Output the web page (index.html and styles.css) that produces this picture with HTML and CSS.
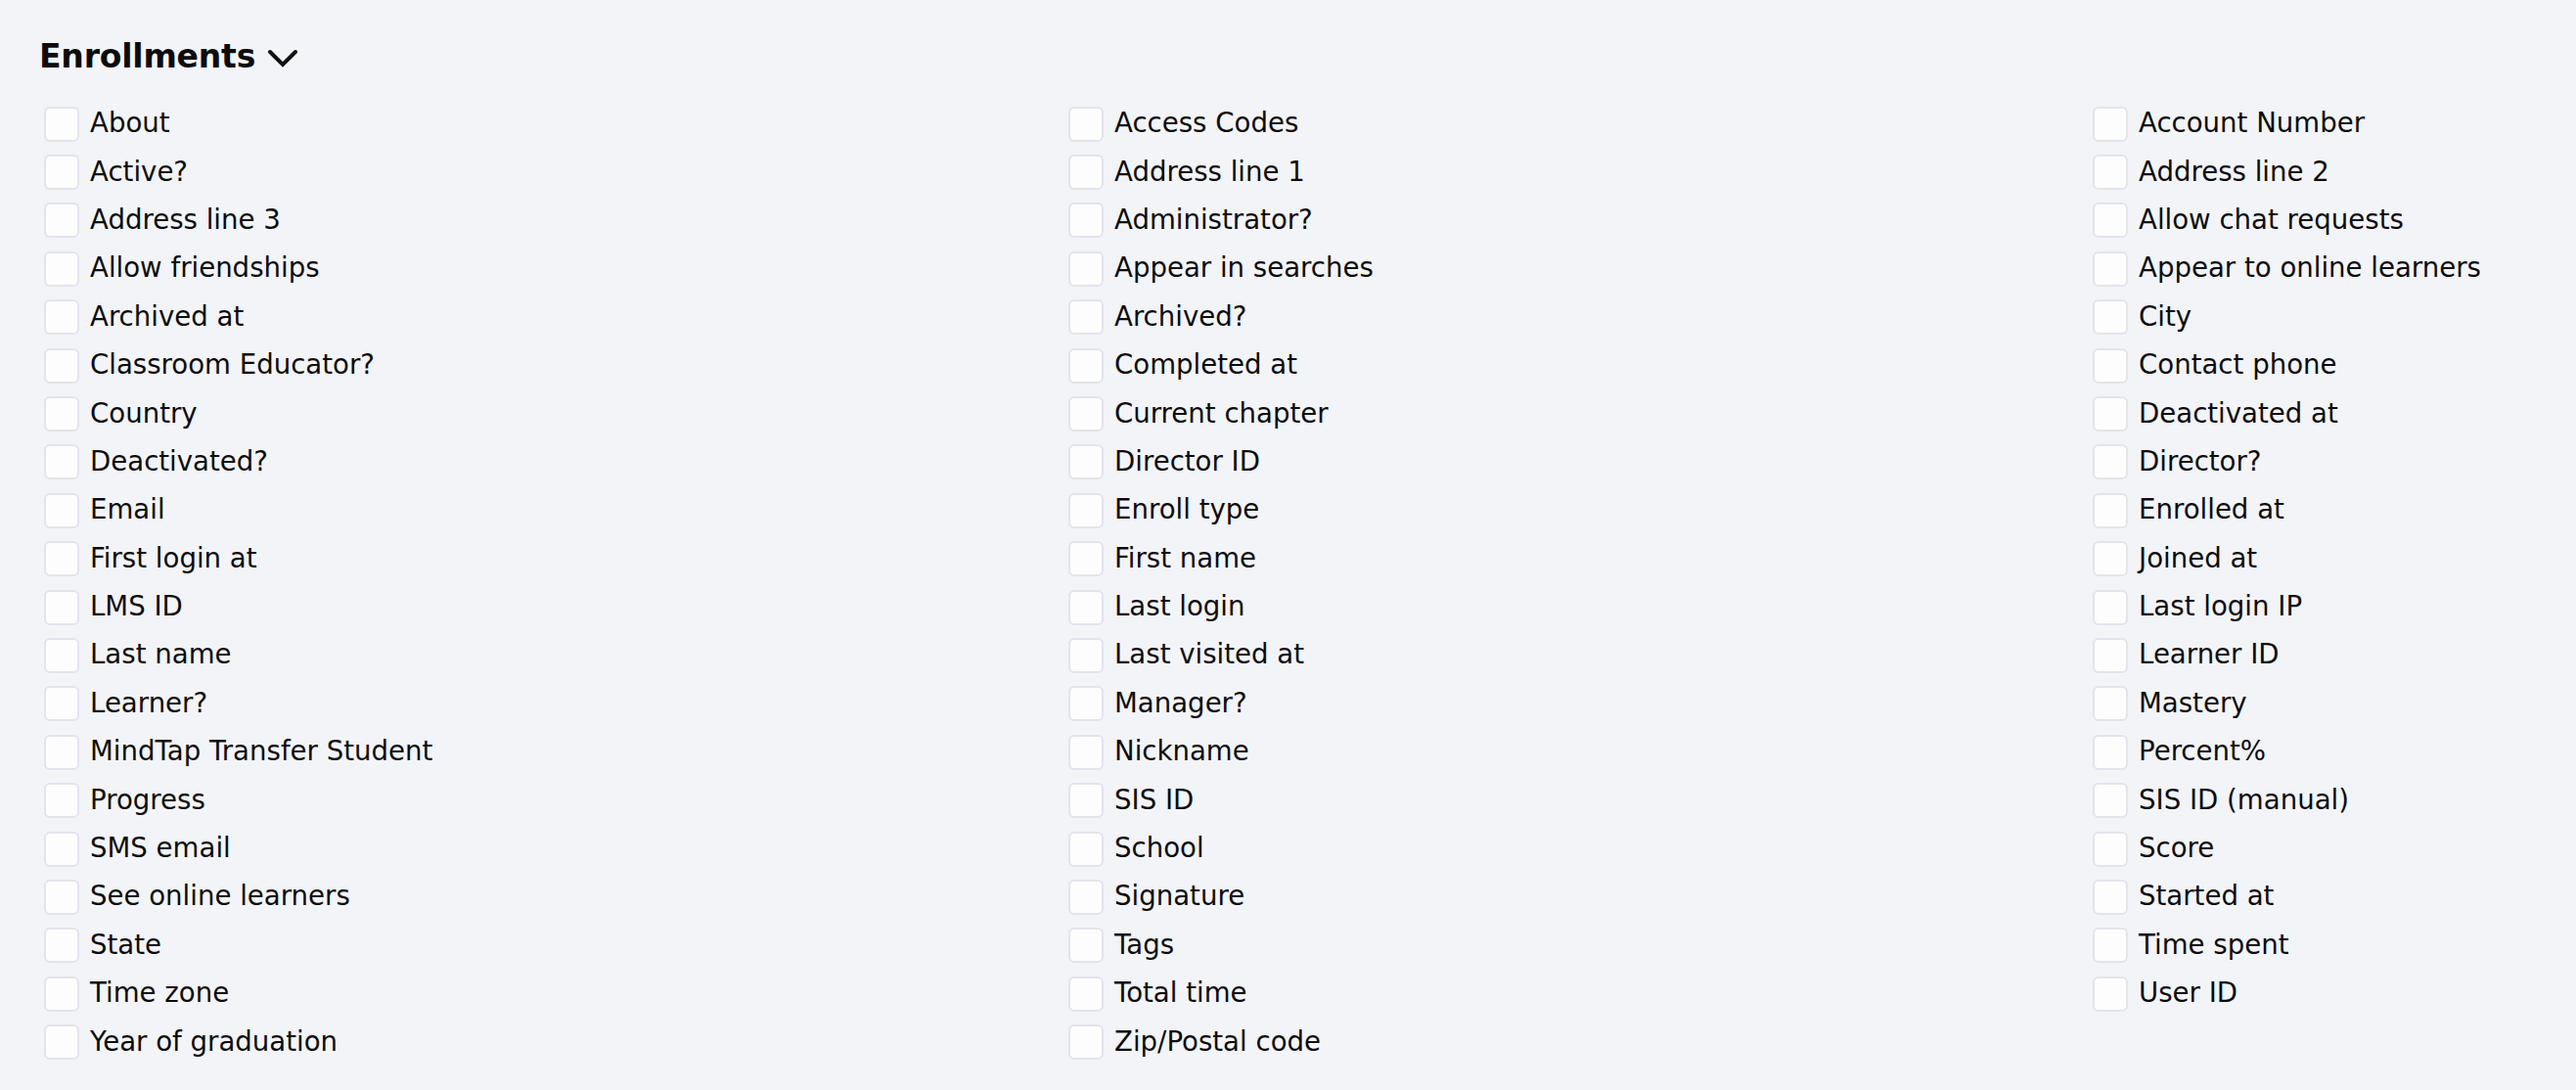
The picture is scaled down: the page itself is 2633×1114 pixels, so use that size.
FILE: index.html
```html
<!DOCTYPE html>
<html lang="en">
<head>
<meta charset="utf-8">
<title>Enrollments</title>
<link rel="stylesheet" href="styles.css">
</head>
<body>
<section class="panel">
  <h2 class="panel-title">Enrollments
    <svg class="chev" viewBox="0 0 32 20" width="32" height="20" aria-hidden="true"><path d="M3 3 L16 16 L29 3" fill="none" stroke="#111" stroke-width="4" stroke-linecap="round" stroke-linejoin="miter"/></svg>
  </h2>
  <div class="fields">
    <label class="field"><span class="box"></span><span class="lbl">About</span></label>
    <label class="field"><span class="box"></span><span class="lbl">Access Codes</span></label>
    <label class="field"><span class="box"></span><span class="lbl">Account Number</span></label>
    <label class="field"><span class="box"></span><span class="lbl">Active?</span></label>
    <label class="field"><span class="box"></span><span class="lbl">Address line 1</span></label>
    <label class="field"><span class="box"></span><span class="lbl">Address line 2</span></label>
    <label class="field"><span class="box"></span><span class="lbl">Address line 3</span></label>
    <label class="field"><span class="box"></span><span class="lbl">Administrator?</span></label>
    <label class="field"><span class="box"></span><span class="lbl">Allow chat requests</span></label>
    <label class="field"><span class="box"></span><span class="lbl">Allow friendships</span></label>
    <label class="field"><span class="box"></span><span class="lbl">Appear in searches</span></label>
    <label class="field"><span class="box"></span><span class="lbl">Appear to online learners</span></label>
    <label class="field"><span class="box"></span><span class="lbl">Archived at</span></label>
    <label class="field"><span class="box"></span><span class="lbl">Archived?</span></label>
    <label class="field"><span class="box"></span><span class="lbl">City</span></label>
    <label class="field"><span class="box"></span><span class="lbl">Classroom Educator?</span></label>
    <label class="field"><span class="box"></span><span class="lbl">Completed at</span></label>
    <label class="field"><span class="box"></span><span class="lbl">Contact phone</span></label>
    <label class="field"><span class="box"></span><span class="lbl">Country</span></label>
    <label class="field"><span class="box"></span><span class="lbl">Current chapter</span></label>
    <label class="field"><span class="box"></span><span class="lbl">Deactivated at</span></label>
    <label class="field"><span class="box"></span><span class="lbl">Deactivated?</span></label>
    <label class="field"><span class="box"></span><span class="lbl">Director ID</span></label>
    <label class="field"><span class="box"></span><span class="lbl">Director?</span></label>
    <label class="field"><span class="box"></span><span class="lbl">Email</span></label>
    <label class="field"><span class="box"></span><span class="lbl">Enroll type</span></label>
    <label class="field"><span class="box"></span><span class="lbl">Enrolled at</span></label>
    <label class="field"><span class="box"></span><span class="lbl">First login at</span></label>
    <label class="field"><span class="box"></span><span class="lbl">First name</span></label>
    <label class="field"><span class="box"></span><span class="lbl">Joined at</span></label>
    <label class="field"><span class="box"></span><span class="lbl">LMS ID</span></label>
    <label class="field"><span class="box"></span><span class="lbl">Last login</span></label>
    <label class="field"><span class="box"></span><span class="lbl">Last login IP</span></label>
    <label class="field"><span class="box"></span><span class="lbl">Last name</span></label>
    <label class="field"><span class="box"></span><span class="lbl">Last visited at</span></label>
    <label class="field"><span class="box"></span><span class="lbl">Learner ID</span></label>
    <label class="field"><span class="box"></span><span class="lbl">Learner?</span></label>
    <label class="field"><span class="box"></span><span class="lbl">Manager?</span></label>
    <label class="field"><span class="box"></span><span class="lbl">Mastery</span></label>
    <label class="field"><span class="box"></span><span class="lbl">MindTap Transfer Student</span></label>
    <label class="field"><span class="box"></span><span class="lbl">Nickname</span></label>
    <label class="field"><span class="box"></span><span class="lbl">Percent%</span></label>
    <label class="field"><span class="box"></span><span class="lbl">Progress</span></label>
    <label class="field"><span class="box"></span><span class="lbl">SIS ID</span></label>
    <label class="field"><span class="box"></span><span class="lbl">SIS ID (manual)</span></label>
    <label class="field"><span class="box"></span><span class="lbl">SMS email</span></label>
    <label class="field"><span class="box"></span><span class="lbl">School</span></label>
    <label class="field"><span class="box"></span><span class="lbl">Score</span></label>
    <label class="field"><span class="box"></span><span class="lbl">See online learners</span></label>
    <label class="field"><span class="box"></span><span class="lbl">Signature</span></label>
    <label class="field"><span class="box"></span><span class="lbl">Started at</span></label>
    <label class="field"><span class="box"></span><span class="lbl">State</span></label>
    <label class="field"><span class="box"></span><span class="lbl">Tags</span></label>
    <label class="field"><span class="box"></span><span class="lbl">Time spent</span></label>
    <label class="field"><span class="box"></span><span class="lbl">Time zone</span></label>
    <label class="field"><span class="box"></span><span class="lbl">Total time</span></label>
    <label class="field"><span class="box"></span><span class="lbl">User ID</span></label>
    <label class="field"><span class="box"></span><span class="lbl">Year of graduation</span></label>
    <label class="field"><span class="box"></span><span class="lbl">Zip/Postal code</span></label>
  </div>
</section>
</body>
</html>
```
FILE: styles.css
```css
html, body {
  margin: 0;
  padding: 0;
  background: #f3f4f8;
}
body {
  font-family: "DejaVu Sans", "Noto Sans", sans-serif;
  color: #0c0c0c;
  width: 2633px;
  height: 1114px;
  overflow: hidden;
}
.panel {
  padding: 36px 0 0 40px;
}
.panel-title {
  margin: 0;
  display: flex;
  align-items: center;
  gap: 12px;
  font-size: 33px;
  font-weight: 700;
  line-height: 44px;
  letter-spacing: -0.2px;
}
.chev {
  display: block;
  margin-top: 4px;
}
.fields {
  margin-top: 22px;
  padding-left: 5px;
  display: grid;
  grid-template-columns: 1047px 1047px 1fr;
  grid-auto-rows: 49.4px;
}
.field {
  display: flex;
  align-items: center;
  gap: 11px;
  font-size: 27.6px;
  white-space: nowrap;
}
.box {
  width: 32px;
  height: 32px;
  flex: 0 0 auto;
  background: #fdfdfe;
  border: 2px solid #e3e4ec;
  border-radius: 6px;
}
.lbl {
  line-height: 35px;
  padding-bottom: 2px;
}
```
